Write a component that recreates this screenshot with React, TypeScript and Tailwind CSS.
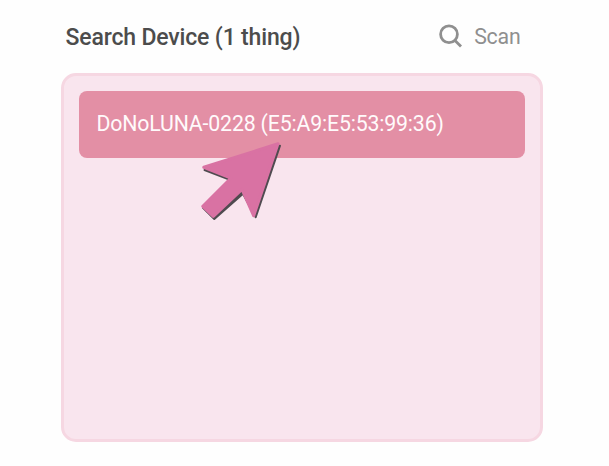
export default function App() {
  return (
    <div className="h-[466px] w-[609px] overflow-hidden bg-[#fefefe] pt-[18px] pl-[61px] font-['Roboto',sans-serif]">
      <header className="flex h-[38px] w-[482px] items-center justify-between pr-[22.5px] pl-[4.5px]">
        <h1 className="pt-px text-[23px] leading-none font-medium tracking-[-0.16px] whitespace-nowrap text-[#4c4c4c]">Search Device (1 thing)</h1>
        <button className="flex items-center gap-[11px] text-[#8f8f8f]">
          <svg className="-mt-0.5" width="24" height="24" viewBox="0 0 24 24" fill="none" stroke="currentColor" strokeWidth="2.8">
            <circle cx="10" cy="10.3" r="8.4" />
            <path d="m15.7 16.2 6.3 6.3" />
          </svg>
          <span className="pb-px text-[21.3px] leading-none tracking-[-0.2px]">Scan</span>
        </button>
      </header>
      <main className="relative mt-[16.5px] h-[369.5px] w-[482px] rounded-[15px] border-[3px] border-[#f6d7e2] bg-[#f9e5ee] p-[15px]">
        <div className="flex h-[67.5px] w-[446px] items-center rounded-lg bg-[#e38fa5] pb-[1.5px] pl-[17.5px] text-[21.3px] leading-none tracking-[-0.17px] whitespace-nowrap text-[#fffafb]">
          DoNoLUNA-0228 (E5:A9:E5:53:99:36)
        </div>
        <svg className="absolute top-[64.5px] left-[134px]" width="88" height="84" viewBox="198 140 88 84" strokeLinejoin="round">
          <path d="M280 145.8 255.7 217.2 243 193.8 214.3 219 203 207.8 230 179.8 204.5 170Z" fill="#504b50" stroke="#504b50" strokeWidth="2" />
          <path d="M278 143.8 253.7 215.8 242 189.3 213.3 216.3 202.8 206.3 231 178 203.8 167.3Z" fill="#d972a3" stroke="#d972a3" strokeWidth="3" />
        </svg>
      </main>
    </div>
  );
}
